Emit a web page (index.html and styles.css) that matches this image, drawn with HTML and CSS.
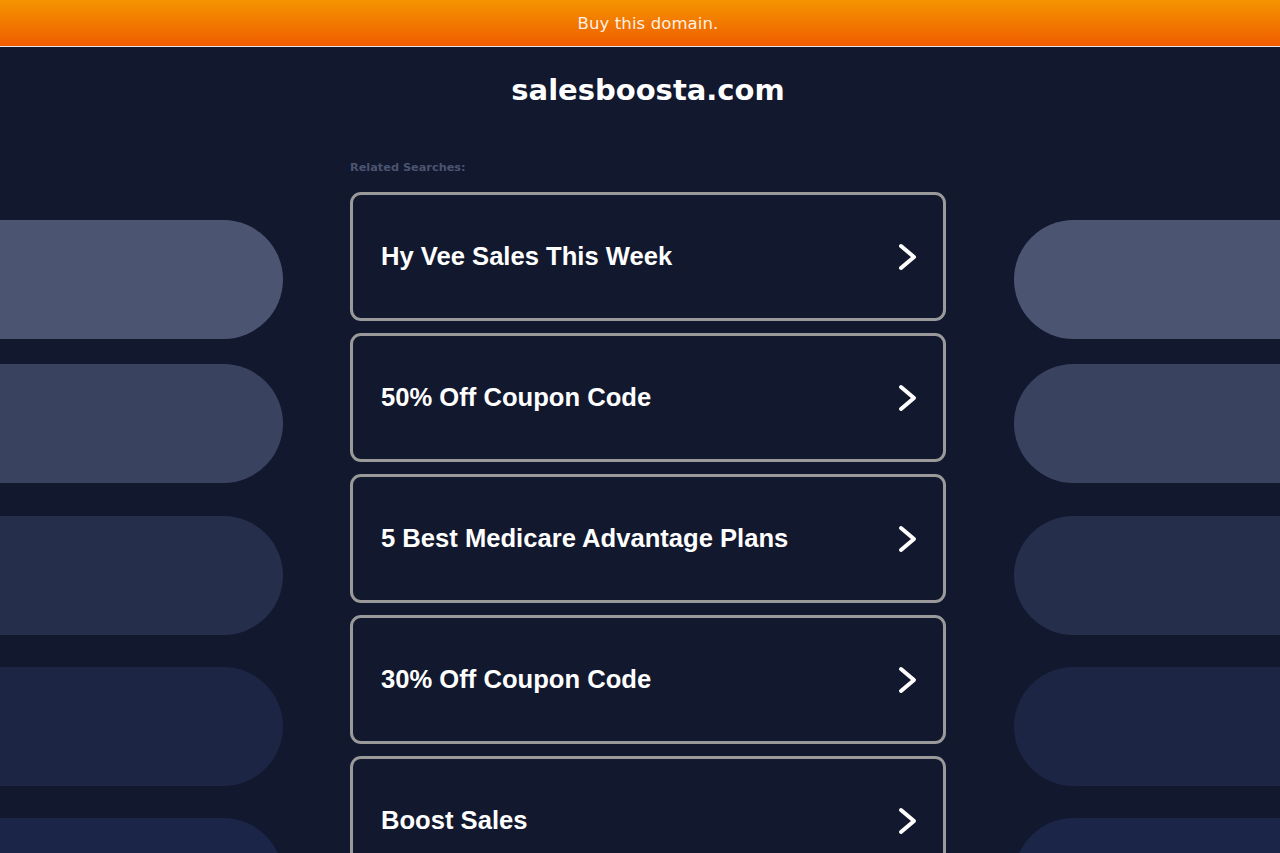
FILE: index.html
```html
<!DOCTYPE html>
<html lang="en">
<head>
<meta charset="utf-8">
<title>salesboosta.com</title>
<link rel="stylesheet" href="styles.css">
</head>
<body>
<header class="topbar"><a class="buy" href="#">Buy this domain.</a></header>
<main class="page">
  <div class="pills pills-left">
    <div class="pill p1"></div>
    <div class="pill p2"></div>
    <div class="pill p3"></div>
    <div class="pill p4"></div>
    <div class="pill p5"></div>
  </div>
  <section class="center">
    <h1 class="domain">salesboosta.com</h1>
    <p class="related">Related Searches:</p>
    <ul class="links">
      <li><a class="link" href="#"><span>Hy Vee Sales This Week</span><svg class="chev" viewBox="0 0 20 28" width="20" height="28"><polyline points="3,3 16,14 3,25"/></svg></a></li>
      <li><a class="link" href="#"><span>50% Off Coupon Code</span><svg class="chev" viewBox="0 0 20 28" width="20" height="28"><polyline points="3,3 16,14 3,25"/></svg></a></li>
      <li><a class="link" href="#"><span>5 Best Medicare Advantage Plans</span><svg class="chev" viewBox="0 0 20 28" width="20" height="28"><polyline points="3,3 16,14 3,25"/></svg></a></li>
      <li><a class="link" href="#"><span>30% Off Coupon Code</span><svg class="chev" viewBox="0 0 20 28" width="20" height="28"><polyline points="3,3 16,14 3,25"/></svg></a></li>
      <li><a class="link" href="#"><span>Boost Sales</span><svg class="chev" viewBox="0 0 20 28" width="20" height="28"><polyline points="3,3 16,14 3,25"/></svg></a></li>
    </ul>
  </section>
  <div class="pills pills-right">
    <div class="pill p1"></div>
    <div class="pill p2"></div>
    <div class="pill p3"></div>
    <div class="pill p4"></div>
    <div class="pill p5"></div>
  </div>
</main>
</body>
</html>
```
FILE: styles.css
```css
html, body {
  margin: 0;
  padding: 0;
}
body {
  background: #12182e;
  height: 853px;
  overflow: hidden;
  font-family: "DejaVu Sans", sans-serif;
}
.topbar {
  height: 46px;
  background: linear-gradient(to bottom, #f59400, #ef5c00);
  border-bottom: 1px solid #e6e6e6;
  display: flex;
  align-items: center;
  justify-content: center;
  padding-left: 16px;
}
.buy {
  color: #fff0e4;
  text-decoration: none;
  font-size: 16.5px;
  letter-spacing: 0.1px;
}
.page {
  display: grid;
  grid-template-columns: 283px 596px 1fr;
  column-gap: 67px;
}
.pills {
  display: flex;
  flex-direction: column;
  padding-top: 173px;
}
.pill {
  height: 119px;
  flex: none;
}
.pills-left .pill { border-radius: 0 60px 60px 0; }
.pills-right .pill { border-radius: 60px 0 0 60px; margin-left: 1px; }
.p1 { background: #4b5572; }
.p2 { background: #394360; margin-top: 25px; }
.p3 { background: #252f4c; margin-top: 33px; }
.p4 { background: #1d2545; margin-top: 32px; }
.p5 { background: #1b2548; margin-top: 32px; }
.center {
  display: flex;
  flex-direction: column;
}
.domain {
  margin: 0;
  padding-top: 24px;
  text-align: center;
  color: #ffffff;
  font-size: 29px;
  line-height: 38px;
  font-weight: 700;
}
.related {
  margin: 0;
  padding-top: 51px;
  font-size: 11.3px;
  line-height: 16px;
  color: #4a5470;
  font-weight: 700;
}
.links {
  list-style: none;
  margin: 0;
  padding: 0;
  padding-top: 16px;
  display: flex;
  flex-direction: column;
  gap: 12px;
}
.link {
  box-sizing: border-box;
  height: 129px;
  border: 3px solid #9a9a9a;
  border-radius: 11px;
  display: flex;
  align-items: center;
  justify-content: space-between;
  padding: 0 25px 0 28px;
  color: #ffffff;
  text-decoration: none;
  font-family: "Liberation Sans", Arial, sans-serif;
  font-weight: 700;
  font-size: 25.6px;
}
.chev {
  fill: none;
  stroke: #ffffff;
  stroke-width: 4;
  stroke-linecap: round;
  stroke-linejoin: round;
}
```
